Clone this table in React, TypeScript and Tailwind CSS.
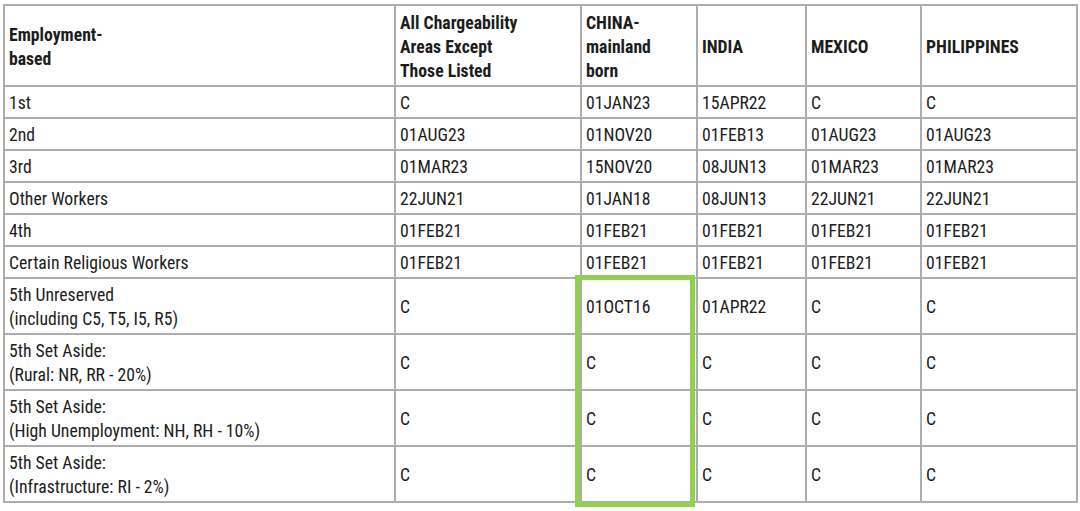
import React from "react";

type Row = { label: string[]; cells: string[]; tall?: boolean };

const rows: Row[] = [
  { label: ["1st"], cells: ["C", "01JAN23", "15APR22", "C", "C"] },
  { label: ["2nd"], cells: ["01AUG23", "01NOV20", "01FEB13", "01AUG23", "01AUG23"] },
  { label: ["3rd"], cells: ["01MAR23", "15NOV20", "08JUN13", "01MAR23", "01MAR23"] },
  { label: ["Other Workers"], cells: ["22JUN21", "01JAN18", "08JUN13", "22JUN21", "22JUN21"] },
  { label: ["4th"], cells: ["01FEB21", "01FEB21", "01FEB21", "01FEB21", "01FEB21"] },
  { label: ["Certain Religious Workers"], cells: ["01FEB21", "01FEB21", "01FEB21", "01FEB21", "01FEB21"] },
  { label: ["5th Unreserved", "(including C5, T5, I5, R5)"], cells: ["C", "01OCT16", "01APR22", "C", "C"], tall: true },
  { label: ["5th Set Aside:", "(Rural: NR, RR - 20%)"], cells: ["C", "C", "C", "C", "C"], tall: true },
  { label: ["5th Set Aside:", "(High Unemployment: NH, RH - 10%)"], cells: ["C", "C", "C", "C", "C"], tall: true },
  { label: ["5th Set Aside:", "(Infrastructure: RI - 2%)"], cells: ["C", "C", "C", "C", "C"], tall: true },
];

const headers: string[][] = [
  ["Employment-", "based"],
  ["All Chargeability", "Areas Except", "Those Listed"],
  ["CHINA-", "mainland", "born"],
  ["INDIA"],
  ["MEXICO"],
  ["PHILIPPINES"],
];

const cell = "border-2 border-[#adadad] pl-[4px] pr-1 pt-[2px] pb-0 align-middle text-left";

export default function App() {
  return (
    <div
      className="relative w-[1080px] h-[511px] bg-white overflow-hidden pl-[3px] pt-[4px] text-[#1c1c1c]"
      style={{ fontFamily: '"Roboto Condensed", "Liberation Sans Narrow", Roboto, sans-serif', fontStretch: "condensed" }}
    >
      <table className="table-fixed border-collapse w-[1075px] text-[17.7px] leading-[24px]">
        <colgroup>
          <col className="w-[391px]" />
          <col className="w-[186px]" />
          <col className="w-[116px]" />
          <col className="w-[109px]" />
          <col className="w-[115px]" />
          <col className="w-[156px]" />
        </colgroup>
        <thead>
          <tr className="h-[81px]">
            {headers.map((h, i) => (
              <th key={i} className={cell + " font-bold"}>
                {h.map((l, j) => (
                  <div key={j}>{l}</div>
                ))}
              </th>
            ))}
          </tr>
        </thead>
        <tbody>
          {rows.map((r, i) => (
            <tr key={i} className={r.tall ? "h-[56px]" : "h-[32px]"}>
              <td className={cell}>
                {r.label.map((l, j) => (
                  <div key={j}>{l}</div>
                ))}
              </td>
              {r.cells.map((c, j) => (
                <td key={j} className={cell}>
                  {c}
                </td>
              ))}
            </tr>
          ))}
        </tbody>
      </table>
      <div className="absolute left-[575px] top-[275px] w-[120px] h-[232px] border-[5px] border-[#92d050]" />
    </div>
  );
}
